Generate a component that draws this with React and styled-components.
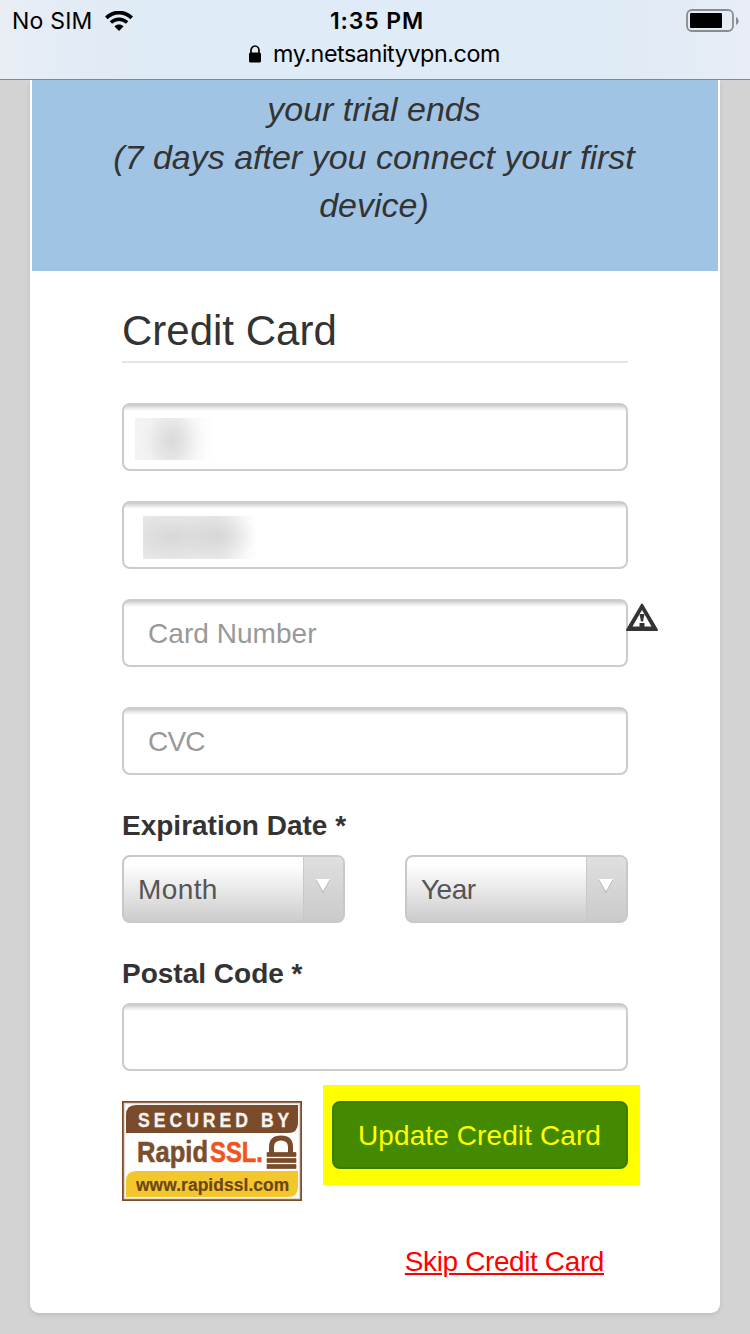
import React from "react";
import styled, { createGlobalStyle } from "styled-components";

const GlobalStyle = createGlobalStyle`
  * { box-sizing: border-box; }
  html, body { margin: 0; padding: 0; }
  body {
    background: #d3d3d3;
    color: #333;
    font-family: "Liberation Sans", Arial, sans-serif;
    font-size: 28px;
    overflow: hidden;
  }
`;

const Screen = styled.div`
  width: 750px;
  height: 1334px;
  display: flex;
  flex-direction: column;
  overflow: hidden;
`;

const BrowserBar = styled.header`
  flex: none;
  height: 80px;
  border-bottom: 1px solid #7f8a96;
  background: linear-gradient(90deg, #eaeef4 0, #e4ecf5 50px, #dfebf6 150px, #dfebf6 600px, #e4ecf5 700px, #e9edf5 750px);
  color: #000;
  font-family: Inter, sans-serif;
`;

const StatusRow = styled.div`
  display: grid;
  grid-template-columns: 1fr auto 1fr;
  align-items: center;
  height: 41px;
  padding: 1px 11px 0 12px;
`;

const Carrier = styled.div`
  display: flex;
  align-items: center;
  gap: 12px;
  font-size: 23px;
  line-height: 28px;
  letter-spacing: 0.2px;
`;

const Clock = styled.div`
  padding-left: 3px;
  font-size: 23px;
  line-height: 28px;
  font-weight: 600;
  letter-spacing: 0.85px;
`;

const BatterySlot = styled.div`
  display: flex;
  justify-content: flex-end;
  padding-bottom: 2px;
`;

const AddressRow = styled.div`
  display: flex;
  justify-content: center;
  align-items: center;
  gap: 12px;
  height: 26px;
  padding-right: 1px;
  font-size: 23.3px;
  line-height: 26px;
  letter-spacing: -0.43px;
`;

const Card = styled.main`
  width: 690px;
  height: 1233px;
  margin: 0 auto;
  padding: 0 2px;
  background: #fff;
  border-radius: 0 0 9px 9px;
  box-shadow: 0 2px 4px rgba(0, 0, 0, 0.1);
`;

const Banner = styled.div`
  height: 191px;
  padding-top: 5px;
  background: #a1c4e5;
`;

const BannerText = styled.p`
  margin: 0;
  padding-right: 2px;
  font-size: 34px;
  line-height: 48px;
  font-style: italic;
  text-align: center;
  white-space: nowrap;
`;

const Form = styled.form`
  display: flex;
  flex-direction: column;
  margin: 0 90px;
`;

const Heading = styled.h1`
  height: 92px;
  margin: 0 0 40px;
  padding-top: 36px;
  border-bottom: 2px solid #e5e5e5;
  font-size: 42px;
  line-height: 48px;
  font-weight: 400;
`;

const Field = styled.div`
  display: flex;
  align-items: center;
  height: 68px;
  margin-bottom: ${(p) => p.$after || 0}px;
  border: 2px solid #ccc;
  border-radius: 8px;
  background: linear-gradient(#cbcbcb 0, #e8e8e8 3px, #fff 6px);
`;

const Input = styled.input`
  flex: 1;
  min-width: 0;
  height: 40px;
  margin-top: 1px;
  padding: 0 24px;
  border: 0;
  outline: 0;
  background: transparent;
  color: #555;
  font: 28px "Liberation Sans", Arial, sans-serif;
  letter-spacing: ${(p) => p.$tracking || 0}px;
  &::placeholder { color: #999; opacity: 1; }
`;

const FirstNameMask = styled.div`
  width: 82px;
  height: 42px;
  margin: 4px 0 0 11px;
  background:
    radial-gradient(ellipse 34px 40px at 37px 23px, rgba(205, 205, 205, 0.65), rgba(212, 212, 212, 0.45) 40%, rgba(230, 230, 230, 0.15) 75%, transparent),
    linear-gradient(90deg, #f3f3f3, #f1f1f1 40px, #fff 78px);
`;

const LastNameMask = styled.div`
  width: 118px;
  height: 43px;
  margin: 4px 0 0 19px;
  background:
    radial-gradient(ellipse 36px 28px at 76px 20px, rgba(208, 208, 208, 0.7), transparent),
    radial-gradient(ellipse 50px 26px at 30px 21px, rgba(208, 208, 208, 0.7), transparent),
    linear-gradient(90deg, #e8e8e8, #e9e9e9 75px, #fff 115px);
`;

const CardNumberRow = styled.div`
  display: grid;
  grid-template-columns: 506px 34px;
  margin-bottom: 40px;
`;

const Warning = styled.svg`
  margin: 3px 0 0 -3px;
`;

const Label = styled.label`
  margin: 31px 0 9px;
  font-weight: 700;
  line-height: 40px;
`;

const Selects = styled.div`
  display: flex;
  justify-content: space-between;
`;

const Select = styled.button`
  display: flex;
  width: 223px;
  height: 68px;
  padding: 0;
  border: 2px solid #c8c8c8;
  border-radius: 8px;
  overflow: hidden;
  background: linear-gradient(#fff 0, #fdfdfd 15%, #ccc);
  color: #555;
  font: 28px "Liberation Sans", Arial, sans-serif;
  letter-spacing: ${(p) => p.$tracking || 0}px;
  text-align: left;
`;

const SelectText = styled.span`
  flex: 1;
  padding-left: 14px;
  line-height: 66px;
`;

const SelectArrow = styled.span`
  display: flex;
  justify-content: center;
  width: 40px;
  height: 64px;
  padding: 21px 2px 0 0;
  border-left: 1px solid #c8c8c8;
  background: linear-gradient(#dfdfdf, #cbcbcb);
`;

const Actions = styled.div`
  display: flex;
  align-items: flex-start;
  gap: 21px;
  height: 100px;
  margin-top: 30px;
`;

const Highlight = styled.div`
  flex: none;
  margin-top: -16px;
  padding: 16px 12px 16px 9px;
  background: #ff0;
`;

const Submit = styled.button`
  display: block;
  width: 296px;
  height: 68px;
  padding: 2px 1px 0 0;
  border: 2px solid #387c00;
  border-radius: 8px;
  background: #438a00;
  color: #ff0;
  font: 28px "Liberation Sans", Arial, sans-serif;
  letter-spacing: 0.1px;
`;

const Seal = styled.svg`
  flex: none;
`;

const SkipLink = styled.a`
  align-self: flex-end;
  margin: 41px 24px 0 0;
  color: #f00;
  line-height: 40px;
  letter-spacing: -0.39px;
  text-decoration: underline;
  text-decoration-thickness: 2px;
  text-underline-offset: 2px;
`;

const WifiIcon = () => (
  <svg width="28" height="21" viewBox="0 0 28 21" fill="none" stroke="#000">
    <path d="M1.3 6.8C8.5-.2 19.5-.2 26.7 6.8" strokeWidth="3.7" />
    <path d="M5.9 11.6C10.5 7.2 17.5 7.2 22.1 11.6" strokeWidth="3.5" />
    <path d="M9.5 15.4c2.600-2.500 6.400-2.500 9 0L14 20Z" fill="#000" stroke="none" />
  </svg>
);

const BatteryIcon = () => (
  <svg width="53" height="23" viewBox="0 0 53 23">
    <rect x="1" y="1" width="46" height="21" rx="5" fill="none" stroke="#878c91" strokeWidth="1.8" />
    <rect x="4" y="4" width="32" height="15" rx="1" fill="#000" />
    <path d="M50 8c3.5 1.5 3.5 6.5 0 8Z" fill="#878c91" />
  </svg>
);

const LockIcon = () => (
  <svg width="12" height="18" viewBox="0 0 12 18">
    <path d="M2 8V5.5a4 4.5 0 0 1 8 0V8" fill="none" stroke="#000" strokeWidth="1.7" />
    <rect x="0" y="7.5" width="12" height="10" rx="1.5" fill="#000" />
  </svg>
);

const ArrowIcon = () => (
  <svg width="16" height="16" viewBox="0 0 16 16">
    <path d="M1 2h14L8 15Z" fill="#aaa" />
    <path d="M1 1h14L8 13.5Z" fill="#fff" />
  </svg>
);

const WarningIcon = () => (
  <Warning width="34" height="30" viewBox="0 0 34 30">
    <path d="M17 2.5 32 28H2Z" fill="#333" stroke="#333" strokeWidth="2" strokeLinejoin="round" />
    <path d="M17 8 26.5 24.500H7.500Z" fill="#fff" />
    <path d="M14.5 12h5l-1.500 7.500h-2Z" fill="#333" />
    <rect x="14.5" y="21" width="5" height="4" fill="#333" />
  </Warning>
);

const RapidSslSeal = () => (
  <Seal width="180" height="100" viewBox="0 0 180 100">
    <rect x="1" y="1" width="178" height="98" fill="#fff" stroke="#7a4c2c" strokeWidth="2" />
    <rect x="2.5" y="2.5" width="175" height="95" fill="none" stroke="#e2d8d2" strokeWidth="1.5" />
    <path d="M14 4H176V22Q176 32 166 32H4V14Q4 4 14 4Z" fill="#794b2b" />
    <path d="M14 70H176V86Q176 96 166 96H4V80Q4 70 14 70Z" fill="#f3c72c" />
    <g fontFamily="Liberation Sans, Arial, sans-serif" fontWeight="700">
      <text transform="translate(16 26) scale(.88 1)" fontSize="20" fill="#f8f3ef" stroke="#f8f3ef" strokeWidth=".3" textLength="172" lengthAdjust="spacing">SECURED BY</text>
      <text x="15" y="61" fontSize="29" fill="#794f2c" stroke="#794f2c" strokeWidth=".6" textLength="71" lengthAdjust="spacingAndGlyphs">Rapid</text>
      <text x="88" y="61" fontSize="29" fill="#f05423" stroke="#f05423" strokeWidth=".6" textLength="53" lengthAdjust="spacingAndGlyphs">SSL.</text>
      <text transform="translate(14 90) scale(.94 1)" fontSize="18.5" fill="#6c4518" stroke="#6c4518" strokeWidth=".2" textLength="163" lengthAdjust="spacing">www.rapidssl.com</text>
    </g>
    <path d="M149.5 52V46Q149.5 37 159 37T168.5 46V52" fill="none" stroke="#794b2b" strokeWidth="5" />
    <path d="M145 51.5h29v4h-29ZM145 57.5h29v4h-29ZM145 63.5h29v4h-29Z" fill="#794b2b" stroke="#794b2b" strokeWidth=".7" strokeLinejoin="round" />
  </Seal>
);

export default function App() {
  return (
    <Screen>
      <GlobalStyle />
      <BrowserBar>
        <StatusRow>
          <Carrier>No SIM <WifiIcon /></Carrier>
          <Clock>1:35 PM</Clock>
          <BatterySlot><BatteryIcon /></BatterySlot>
        </StatusRow>
        <AddressRow><LockIcon /><span>my.netsanityvpn.com</span></AddressRow>
      </BrowserBar>
      <Card>
        <Banner>
          <BannerText>
            your trial ends<br />
            (7 days after you connect your first<br />
            device)
          </BannerText>
        </Banner>
        <Form onSubmit={(e) => e.preventDefault()}>
          <Heading>Credit Card</Heading>
          <Field $after={30}><FirstNameMask /></Field>
          <Field $after={30}><LastNameMask /></Field>
          <CardNumberRow>
            <Field><Input placeholder="Card Number" $tracking={0.05} /></Field>
            <WarningIcon />
          </CardNumberRow>
          <Field><Input placeholder="CVC" $tracking={-0.8} /></Field>
          <Label>Expiration Date *</Label>
          <Selects>
            <Select type="button" $tracking={0.4}><SelectText>Month</SelectText><SelectArrow><ArrowIcon /></SelectArrow></Select>
            <Select type="button" $tracking={-0.5}><SelectText>Year</SelectText><SelectArrow><ArrowIcon /></SelectArrow></Select>
          </Selects>
          <Label htmlFor="postal">Postal Code *</Label>
          <Field><Input id="postal" /></Field>
          <Actions>
            <RapidSslSeal />
            <Highlight><Submit>Update Credit Card</Submit></Highlight>
          </Actions>
          <SkipLink href="#skip">Skip Credit Card</SkipLink>
        </Form>
      </Card>
    </Screen>
  );
}
